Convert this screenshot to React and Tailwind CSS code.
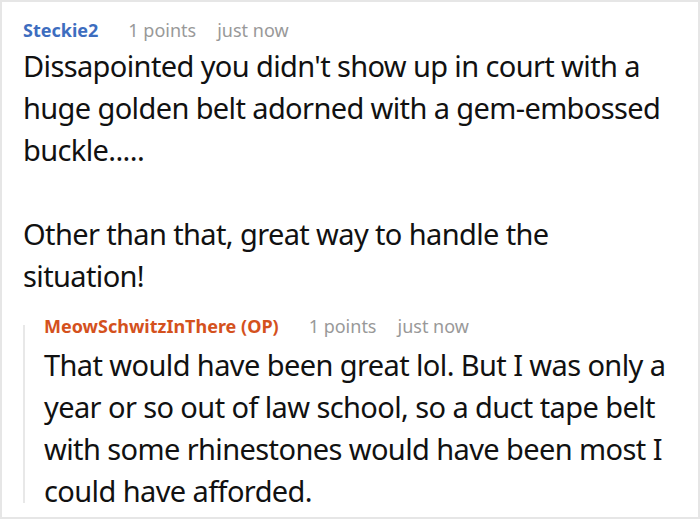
import React from 'react';

const Meta = ({ name, nameClass }) => (
  <div className="flex items-baseline text-[18px] leading-[24px]">
    <span className={`font-bold ${nameClass}`}>{name}</span>
    <span className="ml-[30px] text-[#999999]">1 points</span>
    <span className="ml-[21px] text-[#999999]">just now</span>
  </div>
);

export default function App() {
  return (
    <div className="bg-white w-[700px] h-[520px]">
      <div
        className="w-[700px] h-[519px] border-2 border-[#e6e6e6] text-[#111111] overflow-hidden"
        style={{ fontFamily: '"Noto Sans", "Open Sans", sans-serif' }}
      >
        <div className="pl-[21px] pr-4 pt-[16px]">
          <Meta name="Steckie2" nameClass="text-[#3d6dbf]" />
          <p className="mt-[3px] mr-[14px] text-[29px] leading-[42px] tracking-[-0.62px]">
            Dissapointed you didn't show up in court with a huge golden belt adorned with a gem-embossed buckle.....
            <br />
            <br />
            Other than that, great way to handle the situation!
          </p>
          <div className="mt-[17px] flex">
            <div className="w-[2px] bg-[#e8e8e8] mt-[11px] mb-[9px] shrink-0" />
            <div className="pl-[19px]">
              <Meta name="MeowSchwitzInThere (OP)" nameClass="text-[#d4511d]" />
              <p className="mt-[6px] text-[29px] leading-[42px] tracking-[-0.6px]">
                That would have been great lol. But I was only a year or so out of law school, so a duct tape belt with some rhinestones would have been most I could have afforded.
              </p>
            </div>
          </div>
        </div>
      </div>
    </div>
  );
}
